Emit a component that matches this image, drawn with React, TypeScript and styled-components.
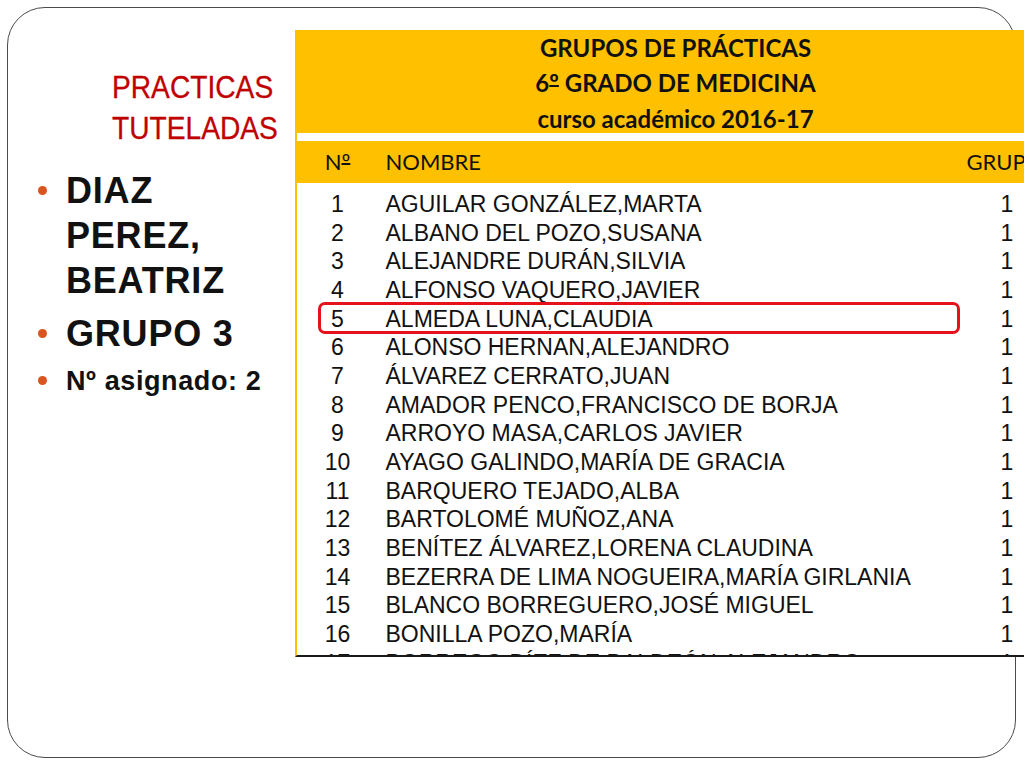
import React from "react";
import styled, { createGlobalStyle } from "styled-components";

const GlobalStyle = createGlobalStyle`
  html, body { margin: 0; padding: 0; background: #ffffff; overflow: hidden; }
  body { font-family: "Liberation Sans", Arial, sans-serif; }
`;

const Slide = styled.div`
  box-sizing: border-box;
  width: 1009px;
  height: 751px;
  margin: 7px 0 0 7px;
  border: 1.5px solid #4a4a4a;
  border-radius: 38px;
  display: flex;
  align-items: flex-start;
  padding-top: 21.5px;
`;

const Side = styled.div`
  width: 286.5px;
  flex-shrink: 0;
  display: flex;
  flex-direction: column;
`;

const Title = styled.h1`
  margin: 37px 0 0 104px;
  display: flex;
  flex-direction: column;
  align-items: flex-start;
  font-family: "Liberation Sans", Arial, sans-serif;
  font-weight: 400;
  font-size: 32px;
  line-height: 41px;
  color: #c00000;
  -webkit-text-stroke: 0.3px #c00000;
`;

const TitleLine = styled.span`
  display: block;
  white-space: nowrap;
  transform: scaleX(0.88);
  transform-origin: left center;
`;

const Bullets = styled.ul`
  list-style: none;
  margin: 19px 0 0 0;
  padding: 0 0 0 29px;
  display: flex;
  flex-direction: column;
  gap: 8px;
`;

const Item = styled.li<{ $small?: boolean }>`
  position: relative;
  padding-left: 29px;
  width: ${(p) => (p.$small ? "230px" : "190px")};
  font-weight: 700;
  font-size: ${(p) => (p.$small ? "27px" : "36px")};
  line-height: ${(p) => (p.$small ? "34px" : "45px")};
  letter-spacing: ${(p) => (p.$small ? "0.6px" : "0.8px")};
  color: #111;
  &::before {
    content: "";
    position: absolute;
    left: 1px;
    top: ${(p) => (p.$small ? "12px" : "18px")};
    width: 9px;
    height: 9px;
    border-radius: 50%;
    background: #d9541e;
  }
`;

const Sheet = styled.div`
  box-sizing: border-box;
  width: 760px;
  height: 627px;
  flex-shrink: 0;
  background: #ffffff;
  border-left: 2px solid #ffc000;
  border-bottom: 2px solid #1a1a1a;
  overflow: hidden;
`;

const Banner = styled.div`
  height: 103px;
  background: #ffc000;
  text-align: center;
  font-family: Lato, "Open Sans", sans-serif;
  font-weight: 700;
  font-size: 24px;
  line-height: 35.5px;
  color: #111;
  overflow: hidden;
`;

const BannerLine = styled.div`
  white-space: nowrap;
`;

const Ord = styled.span`
  text-decoration: underline;
  text-decoration-thickness: 2px;
  text-underline-offset: -7px;
`;

const HeadRow = styled.div`
  margin-top: 8px;
  height: 42px;
  background: #ffc000;
  display: grid;
  grid-template-columns: 82px 581px 1fr;
  align-items: center;
  font-family: Lato, "Open Sans", sans-serif;
  font-size: 22px;
  color: #111;
`;

const Cell = styled.div<{ $align?: "center" | "left" }>`
  text-align: ${(p) => p.$align ?? "left"};
  padding-left: ${(p) => (p.$align === "center" ? "0" : "7px")};
  white-space: nowrap;
`;

const Body = styled.div`
  padding-top: 7.5px;
`;

const Row = styled.div<{ $marked?: boolean }>`
  position: relative;
  height: 28.67px;
  display: grid;
  grid-template-columns: 82px 581px 1fr;
  align-items: center;
  font-family: "Liberation Sans", Arial, sans-serif;
  font-size: 23px;
  line-height: 28.67px;
  color: #111;
  &::after {
    content: "";
    display: ${(p) => (p.$marked ? "block" : "none")};
    position: absolute;
    left: 21px;
    top: -2.5px;
    width: 642px;
    height: 32px;
    box-sizing: border-box;
    border: 3px solid #e5121b;
    border-radius: 7px;
  }
`;

const rows = [
  "AGUILAR GONZÁLEZ,MARTA",
  "ALBANO DEL POZO,SUSANA",
  "ALEJANDRE DURÁN,SILVIA",
  "ALFONSO VAQUERO,JAVIER",
  "ALMEDA LUNA,CLAUDIA",
  "ALONSO HERNAN,ALEJANDRO",
  "ÁLVAREZ CERRATO,JUAN",
  "AMADOR PENCO,FRANCISCO DE BORJA",
  "ARROYO MASA,CARLOS JAVIER",
  "AYAGO GALINDO,MARÍA DE GRACIA",
  "BARQUERO TEJADO,ALBA",
  "BARTOLOMÉ MUÑOZ,ANA",
  "BENÍTEZ ÁLVAREZ,LORENA CLAUDINA",
  "BEZERRA DE LIMA NOGUEIRA,MARÍA GIRLANIA",
  "BLANCO BORREGUERO,JOSÉ MIGUEL",
  "BONILLA POZO,MARÍA",
  "BORREGO DÍEZ DE BALDEÓN,ALEJANDRO",
];

export default function App() {
  return (
    <>
      <GlobalStyle />
      <Slide>
        <Side>
          <Title>
            <TitleLine>PRACTICAS</TitleLine>
            <TitleLine>TUTELADAS</TitleLine>
          </Title>
          <Bullets>
            <Item>DIAZ PEREZ, BEATRIZ</Item>
            <Item>GRUPO 3</Item>
            <Item $small>Nº asignado: 2</Item>
          </Bullets>
        </Side>
        <Sheet>
          <Banner>
            <BannerLine>GRUPOS DE PRÁCTICAS</BannerLine>
            <BannerLine>
              6<Ord>º</Ord> GRADO DE MEDICINA
            </BannerLine>
            <BannerLine>curso académico 2016-17</BannerLine>
          </Banner>
          <HeadRow>
            <Cell $align="center">
              N<Ord>º</Ord>
            </Cell>
            <Cell>NOMBRE</Cell>
            <Cell>GRUPO</Cell>
          </HeadRow>
          <Body>
            {rows.map((name, i) => (
              <Row key={name} $marked={i === 4}>
                <Cell $align="center">{i + 1}</Cell>
                <Cell>{name}</Cell>
                <Cell $align="center">1</Cell>
              </Row>
            ))}
          </Body>
        </Sheet>
      </Slide>
    </>
  );
}
